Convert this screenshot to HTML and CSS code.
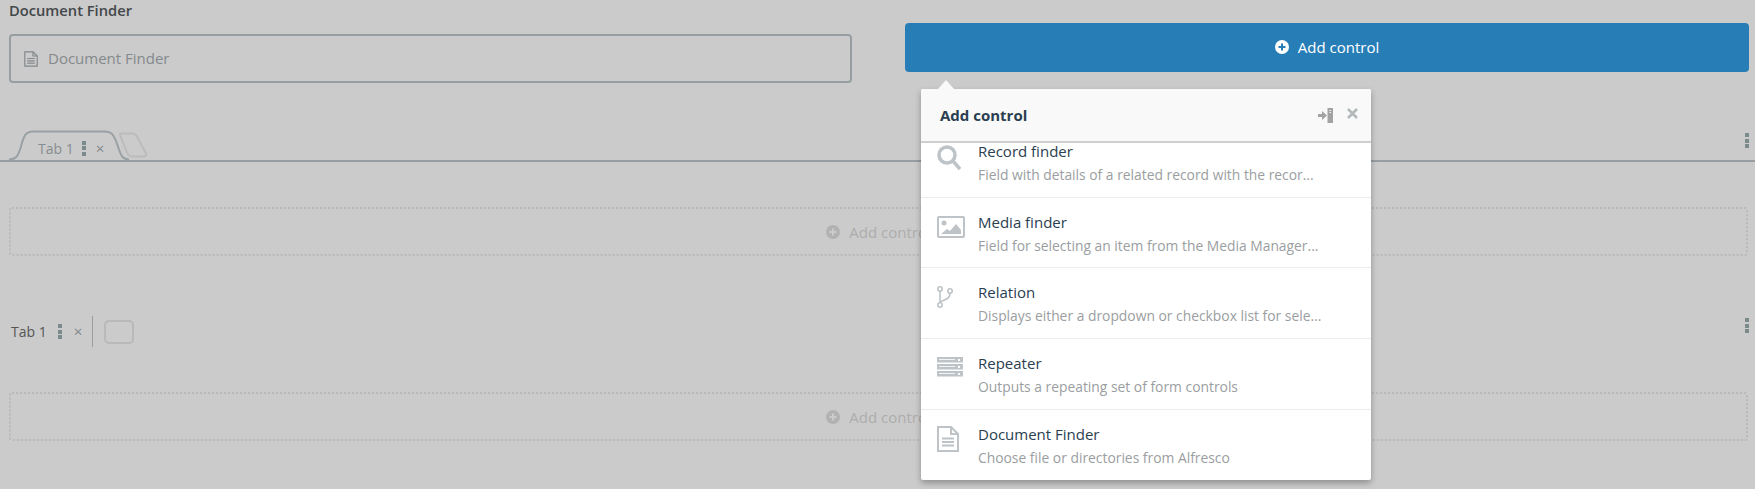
FILE: index.html
```html
<!DOCTYPE html>
<html lang="en">
<head>
  <meta charset="UTF-8" />
  <title>Add control</title>
  <link rel="stylesheet" href="styles.css">
</head>
<body>
  <div class="top-row">
    <div class="field">
      <label class="field-label">Document Finder</label>
      <div class="field-box">
        <svg class="field-icon" width="14" height="16" viewBox="0 0 14 16" fill="none" stroke="#84898c" stroke-width="1.2">
          <path d="M.8.8h8.2l4.2 4.2v10.2H.8z"/><path d="M9 .8v4.200h4.200"/><path d="M3.200 7.500h7.600M3.200 9.800h7.600M3.200 12.100h7.600"/>
        </svg>
        <span class="field-text">Document Finder</span>
      </div>
    </div>
    <button class="add-btn">
      <svg width="14" height="14" viewBox="0 0 14 14"><circle cx="7" cy="7" r="7" fill="#fff"/><path d="M7 3.500v7M3.500 7h7" stroke="#277eb7" stroke-width="2"/></svg>
      Add control
    </button>
  </div>

  <div class="tabs-row">
    <div class="tab-curved">
      <svg class="tab-shape" width="122" height="31" viewBox="0 0 122 31" fill="none" stroke="#9aa1a4" stroke-width="2">
        <path d="M0 29.500c7 0 9-3 12-13C15 5 17 1.500 24 1.500h72c7 0 9 3.500 13 15 3 10 5 13 11 13"/>
      </svg>
      <span class="tab-name">Tab 1</span>
      <span class="dots"><i></i><i></i><i></i></span>
      <span class="tab-close">×</span>
    </div>
    <svg class="tab-ghost" width="31" height="26" viewBox="0 0 31 26" fill="none" stroke="#bcbcbc" stroke-width="2">
      <path d="M2 1.500h12c3 0 4 1 5 3l9 17c.5 1.500 0 3-2 3H15c-3 0-5-1-6-4L2 3z"/>
    </svg>
    <span class="dots dots-end"><i></i><i></i><i></i></span>
  </div>

  <div class="drop-box">
    <svg width="14" height="14" viewBox="0 0 14 14"><circle cx="7" cy="7" r="7" fill="#b2b2b2"/><path d="M7 3.500v7M3.500 7h7" stroke="#cbcbcb" stroke-width="2"/></svg>
    Add control
  </div>

  <div class="tabs-row-plain">
    <span class="tab-name-plain">Tab 1</span>
    <span class="dots tab-dots"><i></i><i></i><i></i></span>
    <span class="tab-close">×</span>
    <span class="tab-divider"></span>
    <span class="tab-ghost-box"></span>
    <span class="dots dots-end"><i></i><i></i><i></i></span>
  </div>

  <div class="drop-box">
    <svg width="14" height="14" viewBox="0 0 14 14"><circle cx="7" cy="7" r="7" fill="#b2b2b2"/><path d="M7 3.500v7M3.500 7h7" stroke="#cbcbcb" stroke-width="2"/></svg>
    Add control
  </div>

  <div class="popover">
    <div class="popover-arrow"></div>
    <div class="popover-header">
      <span class="popover-title">Add control</span>
      <svg class="pin-icon" width="15" height="15" viewBox="0 0 15 15" fill="#a3a3a3">
        <path d="M0 6h4V3l5 4.500-5 4.500V9H0z"/><path d="M9.500 0H15v15H9.500z"/><path d="M11.500 2H13v1h-1.500zM11.500 4H13v1h-1.500z" fill="#f9f9f9"/>
      </svg>
      <svg class="close-icon" width="11" height="11" viewBox="0 0 11 11" stroke="#b3b8bb" stroke-width="2.600">
        <path d="M1 1l9 9M10 1l-9 9"/>
      </svg>
    </div>
    <div class="popover-list">
      <ul class="items">
        <li class="item">
          <svg class="item-icon" width="24" height="26" viewBox="0 0 24 26" fill="none" stroke="#bdc3c7" stroke-width="3.500">
            <circle cx="10" cy="10" r="8"/><path d="M16 16l7 8"/>
          </svg>
          <div class="item-text"><div class="item-title">Record finder</div><div class="item-desc">Field with details of a related record with the recor...</div></div>
        </li>
        <li class="item">
          <svg class="item-icon" width="28" height="22" viewBox="0 0 28 22" fill="none" stroke="#bdc3c7">
            <rect x="1" y="1" width="26" height="20" rx="1" stroke-width="2"/>
            <circle cx="7" cy="7" r="2.500" fill="#bdc3c7" stroke="none"/>
            <path d="M4 18l6-5 3 2 6-7 5 6v4z" fill="#bdc3c7" stroke="none"/>
          </svg>
          <div class="item-text"><div class="item-title">Media finder</div><div class="item-desc">Field for selecting an item from the Media Manager...</div></div>
        </li>
        <li class="item">
          <svg class="item-icon" width="16" height="22" viewBox="0 0 16 22" fill="none" stroke="#bdc3c7" stroke-width="1.600">
            <circle cx="3" cy="3" r="2.200"/><circle cx="3" cy="19" r="2.200"/><circle cx="13" cy="5" r="2.200"/>
            <path d="M3 5.200v11.600M13 7.200c0 4-2 5-5 6.500-3 1.500-4.500 1.500-5 3"/>
          </svg>
          <div class="item-text"><div class="item-title">Relation</div><div class="item-desc">Displays either a dropdown or checkbox list for sele...</div></div>
        </li>
        <li class="item">
          <svg class="item-icon" width="26" height="20" viewBox="0 0 26 20">
            <path d="M0 0h26v5.500H0zM0 7h26v5.500H0zM0 14h26v5.500H0z" fill="#bdc3c7"/>
            <path d="M2 2.500h16M2 9.500h16M2 16.500h16" stroke="#f1f3f4" stroke-width="1"/>
            <path d="M21 2h2v2h-2zM21 9h2v2h-2zM21 16h2v2h-2z" fill="#fff"/>
          </svg>
          <div class="item-text"><div class="item-title">Repeater</div><div class="item-desc">Outputs a repeating set of form controls</div></div>
        </li>
        <li class="item item-last">
          <svg class="item-icon icon-doc" width="22" height="26" viewBox="0 0 22 26" fill="none" stroke="#bdc3c7" stroke-width="2">
            <path d="M1 1h13l7 7v17H1z"/><path d="M14 1v7h7"/><path d="M5 12.500h12M5 16h12M5 19.500h12"/>
          </svg>
          <div class="item-text"><div class="item-title">Document Finder</div><div class="item-desc">Choose file or directories from Alfresco</div></div>
        </li>
      </ul>
    </div>
  </div>
</body>
</html>
```

FILE: styles.css
```css
html, body {
  margin: 0;
  height: 489px;
  overflow: hidden;
}

body {
  font-family: "Open Sans", sans-serif;
  font-size: 15px;
  background: #cbcbcb;
  color: #555;
  position: relative;
}

.top-row {
  display: flex;
  gap: 53px;
  padding: 0 6px 0 9px;
  height: 125px;
}

.field {
  width: 843px;
  flex: none;
}

.field-label {
  display: block;
  height: 34px;
  line-height: 20px;
  font-size: 14.700px;
  font-weight: 600;
  color: #42474a;
}

.field-box {
  height: 49px;
  box-sizing: border-box;
  border: 2px solid #969ea1;
  border-radius: 4px;
  display: flex;
  align-items: center;
  gap: 10px;
  padding-left: 13px;
  color: #84898c;
}

.field-text {
  margin-bottom: 2px;
}

.add-btn {
  flex: 1;
  height: 49px;
  margin-top: 23px;
  padding: 0 0 2px;
  border: 0;
  border-radius: 4px;
  background: #277eb7;
  color: #fff;
  font: inherit;
  display: flex;
  align-items: center;
  justify-content: center;
  gap: 9px;
}

.tabs-row {
  height: 37px;
  box-sizing: border-box;
  border-bottom: 2px solid #969ea1;
  display: flex;
  align-items: flex-end;
  padding-left: 9px;
  padding-right: 6px;
}

.tab-curved {
  position: relative;
  width: 108px;
  height: 31px;
  display: flex;
  align-items: center;
  padding-top: 7px;
  box-sizing: border-box;
  font-size: 14px;
  color: #868d90;
}

.tab-shape {
  position: absolute;
  left: 0;
  top: 1px;
}

.tab-name {
  margin-left: 29px;
}

.tab-close {
  color: #7f878a;
  font-size: 15px;
  line-height: 15px;
  margin-left: 12px;
}

.tab-curved .tab-close {
  margin-left: 10px;
}

.dots {
  display: inline-flex;
  flex-direction: column;
  gap: 1.500px;
  margin-left: 8px;
}

.dots i {
  display: block;
  width: 4px;
  height: 4px;
  background: #7b8a8b;
}

.dots-end {
  margin-left: auto;
  align-self: center;
  position: relative;
  top: -2px;
}

.tab-ghost {
  margin-bottom: 2px;
  margin-left: 1px;
}

.drop-box {
  height: 49px;
  margin: 45px 7px 0 9px;
  box-sizing: border-box;
  border: 2px dotted #b9b9b9;
  border-radius: 3px;
  display: flex;
  align-items: center;
  justify-content: center;
  gap: 9px;
  color: #adadad;
}

.tabs-row-plain {
  height: 31px;
  margin-top: 60px;
  display: flex;
  align-items: center;
  padding: 0 6px 0 11px;
  font-size: 14px;
  color: #555;
}

.tabs-row-plain .dots-end {
  top: -6px;
}

.tab-dots {
  margin-left: 11px;
}

.tab-divider {
  width: 1px;
  height: 31px;
  background: #9c9c9c;
  margin-left: 10px;
}

.tab-ghost-box {
  width: 30px;
  height: 24px;
  box-sizing: border-box;
  border: 2px solid #b9b9b9;
  border-radius: 5px;
  margin-left: 11px;
}

.popover {
  position: absolute;
  left: 921px;
  top: 89px;
  width: 450px;
  background: #fff;
  border-radius: 2px;
  box-shadow: 0 3px 6px rgba(0, 0, 0, .3);
}

.popover-arrow {
  position: absolute;
  left: 17px;
  top: -9px;
  width: 0;
  height: 0;
  border-left: 8px solid transparent;
  border-right: 8px solid transparent;
  border-bottom: 9px solid #f9f9f9;
}

.popover-header {
  height: 52px;
  background: #f9f9f9;
  border-bottom: 2px solid #cfcfcf;
  border-radius: 2px 2px 0 0;
  display: flex;
  align-items: center;
  padding: 0 13px 0 19px;
}

.popover-title {
  font-weight: 700;
  color: #2a3e50;
  flex: 1;
}

.close-icon {
  margin-left: 14px;
  margin-top: -4px;
}

.popover-list {
  height: 337px;
  overflow: hidden;
}

.items {
  list-style: none;
  margin: -16.250px 0 0;
  padding: 0;
}

.item {
  height: 70.750px;
  box-sizing: border-box;
  border-bottom: 1px solid #ececec;
  display: flex;
  position: relative;
  padding: 17px 0 0 16px;
}

.item-last {
  border-bottom: 0;
}

.item-icon {
  flex: none;
  margin-top: 1px;
}

.icon-doc {
  margin-top: -1px;
}

.item-text {
  position: absolute;
  left: 57px;
}

.item-title {
  line-height: 14px;
  color: #2a3e50;
}

.item-desc {
  line-height: 20px;
  margin-top: 7px;
  font-size: 13.850px;
  color: #9a9ea1;
}
```
